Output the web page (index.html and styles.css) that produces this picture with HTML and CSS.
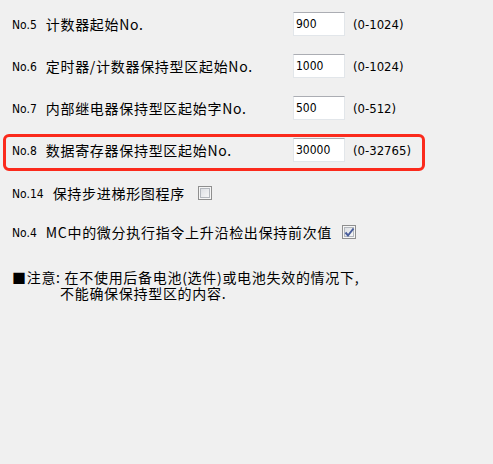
FILE: index.html
```html
<!DOCTYPE html>
<html lang="zh-CN">
<head>
    <meta charset="UTF-8">
    <title>保持型区设置</title>
    <link rel="stylesheet" href="styles.css">
</head>
<body>
<div class="page">
    <div class="row">
        <span class="lead"><span class="num">No.5</span><span class="label">计数器起始No.</span></span>
        <input class="field" type="text" value="900">
        <span class="range">(0-1024)</span>
    </div>
    <div class="row">
        <span class="lead"><span class="num">No.6</span><span class="label">定时器/计数器保持型区起始No.</span></span>
        <input class="field" type="text" value="1000">
        <span class="range">(0-1024)</span>
    </div>
    <div class="row">
        <span class="lead"><span class="num">No.7</span><span class="label">内部继电器保持型区起始字No.</span></span>
        <input class="field" type="text" value="500">
        <span class="range">(0-512)</span>
    </div>
    <div class="row">
        <span class="lead"><span class="num">No.8</span><span class="label">数据寄存器保持型区起始No.</span></span>
        <input class="field" type="text" value="30000">
        <span class="range">(0-32765)</span>
    </div>

    <div class="row check-row">
        <span class="num">No.14</span><span class="label">保持步进梯形图程序</span>
        <span class="box"></span>
    </div>
    <div class="row check-row last">
        <span class="num">No.4</span><span class="label">MC中的微分执行指令上升沿检出保持前次值</span>
        <span class="box">
            <svg width="11" height="11" viewBox="0 0 11 11"><path d="M1.5 5.5 L4 8.5 L9.5 1.5" fill="none" stroke="#4a5e9c" stroke-width="2"/></svg>
        </span>
    </div>

    <div class="note">
        <div>■注意: 在不使用后备电池(选件)或电池失效的情况下,</div>
        <div class="indent">不能确保保持型区的内容.</div>
    </div>

    <!-- highlight around No.8 -->
    <div class="mark"></div>
</div>
</body>
</html>
```

FILE: styles.css
```css
body {
    margin: 0;
    background-color: #f0f0f0;
    color: #000;
    font-family: "DejaVu Sans Condensed", "Noto Sans CJK SC", sans-serif;
}

.page {
    position: relative;
    height: 464px;
    padding: 3px 0 0 12px;
    box-sizing: border-box;
}

.row {
    display: flex;
    align-items: center;
    height: 42px;
}

.lead {
    display: flex;
    align-items: center;
    width: 281px;
}

.num {
    font-size: 12px;
    margin-right: 9px;
    padding-top: 1px;
}

.label {
    font-family: "Noto Sans CJK SC", sans-serif;
    font-size: 14px;
    letter-spacing: 0.7px;
    white-space: nowrap;
}

.field {
    width: 52px;
    height: 24px;
    box-sizing: border-box;
    margin: 0;
    padding: 0 2px;
    border: 1px solid #e2e6ea;
    border-top-color: #abadb3;
    background: #fff;
    font-family: "DejaVu Sans Condensed", sans-serif;
    font-size: 12px;
    color: #000;
    outline: none;
}

.range {
    margin-left: 8px;
    font-size: 13px;
}

/* Check boxes */
.check-row {
    height: 44px;
}

.check-row.last {
    height: 34px;
}

.box {
    display: flex;
    align-items: center;
    justify-content: center;
    width: 14px;
    height: 14px;
    box-sizing: border-box;
    margin-left: 13px;
    border: 1px solid #8f8f8f;
    background: linear-gradient(135deg, #d8dbe0, #fbfbfb);
    box-shadow: inset 0 0 0 1px #f6f6f6, inset 0 0 0 2px #b4b8be;
}

.check-row.last .box {
    margin-left: 10px;
}

/* Note */
.note {
    margin-top: 20px;
    font-family: "Noto Sans CJK SC", sans-serif;
    font-size: 14px;
    line-height: 16px;
    letter-spacing: 0.7px;
}

.indent {
    padding-left: 48px;
}

.mark {
    position: absolute;
    left: 3px;
    top: 134px;
    width: 422px;
    height: 37px;
    box-sizing: border-box;
    border: 3.5px solid #fb2a1c;
    border-radius: 6px;
}
```
